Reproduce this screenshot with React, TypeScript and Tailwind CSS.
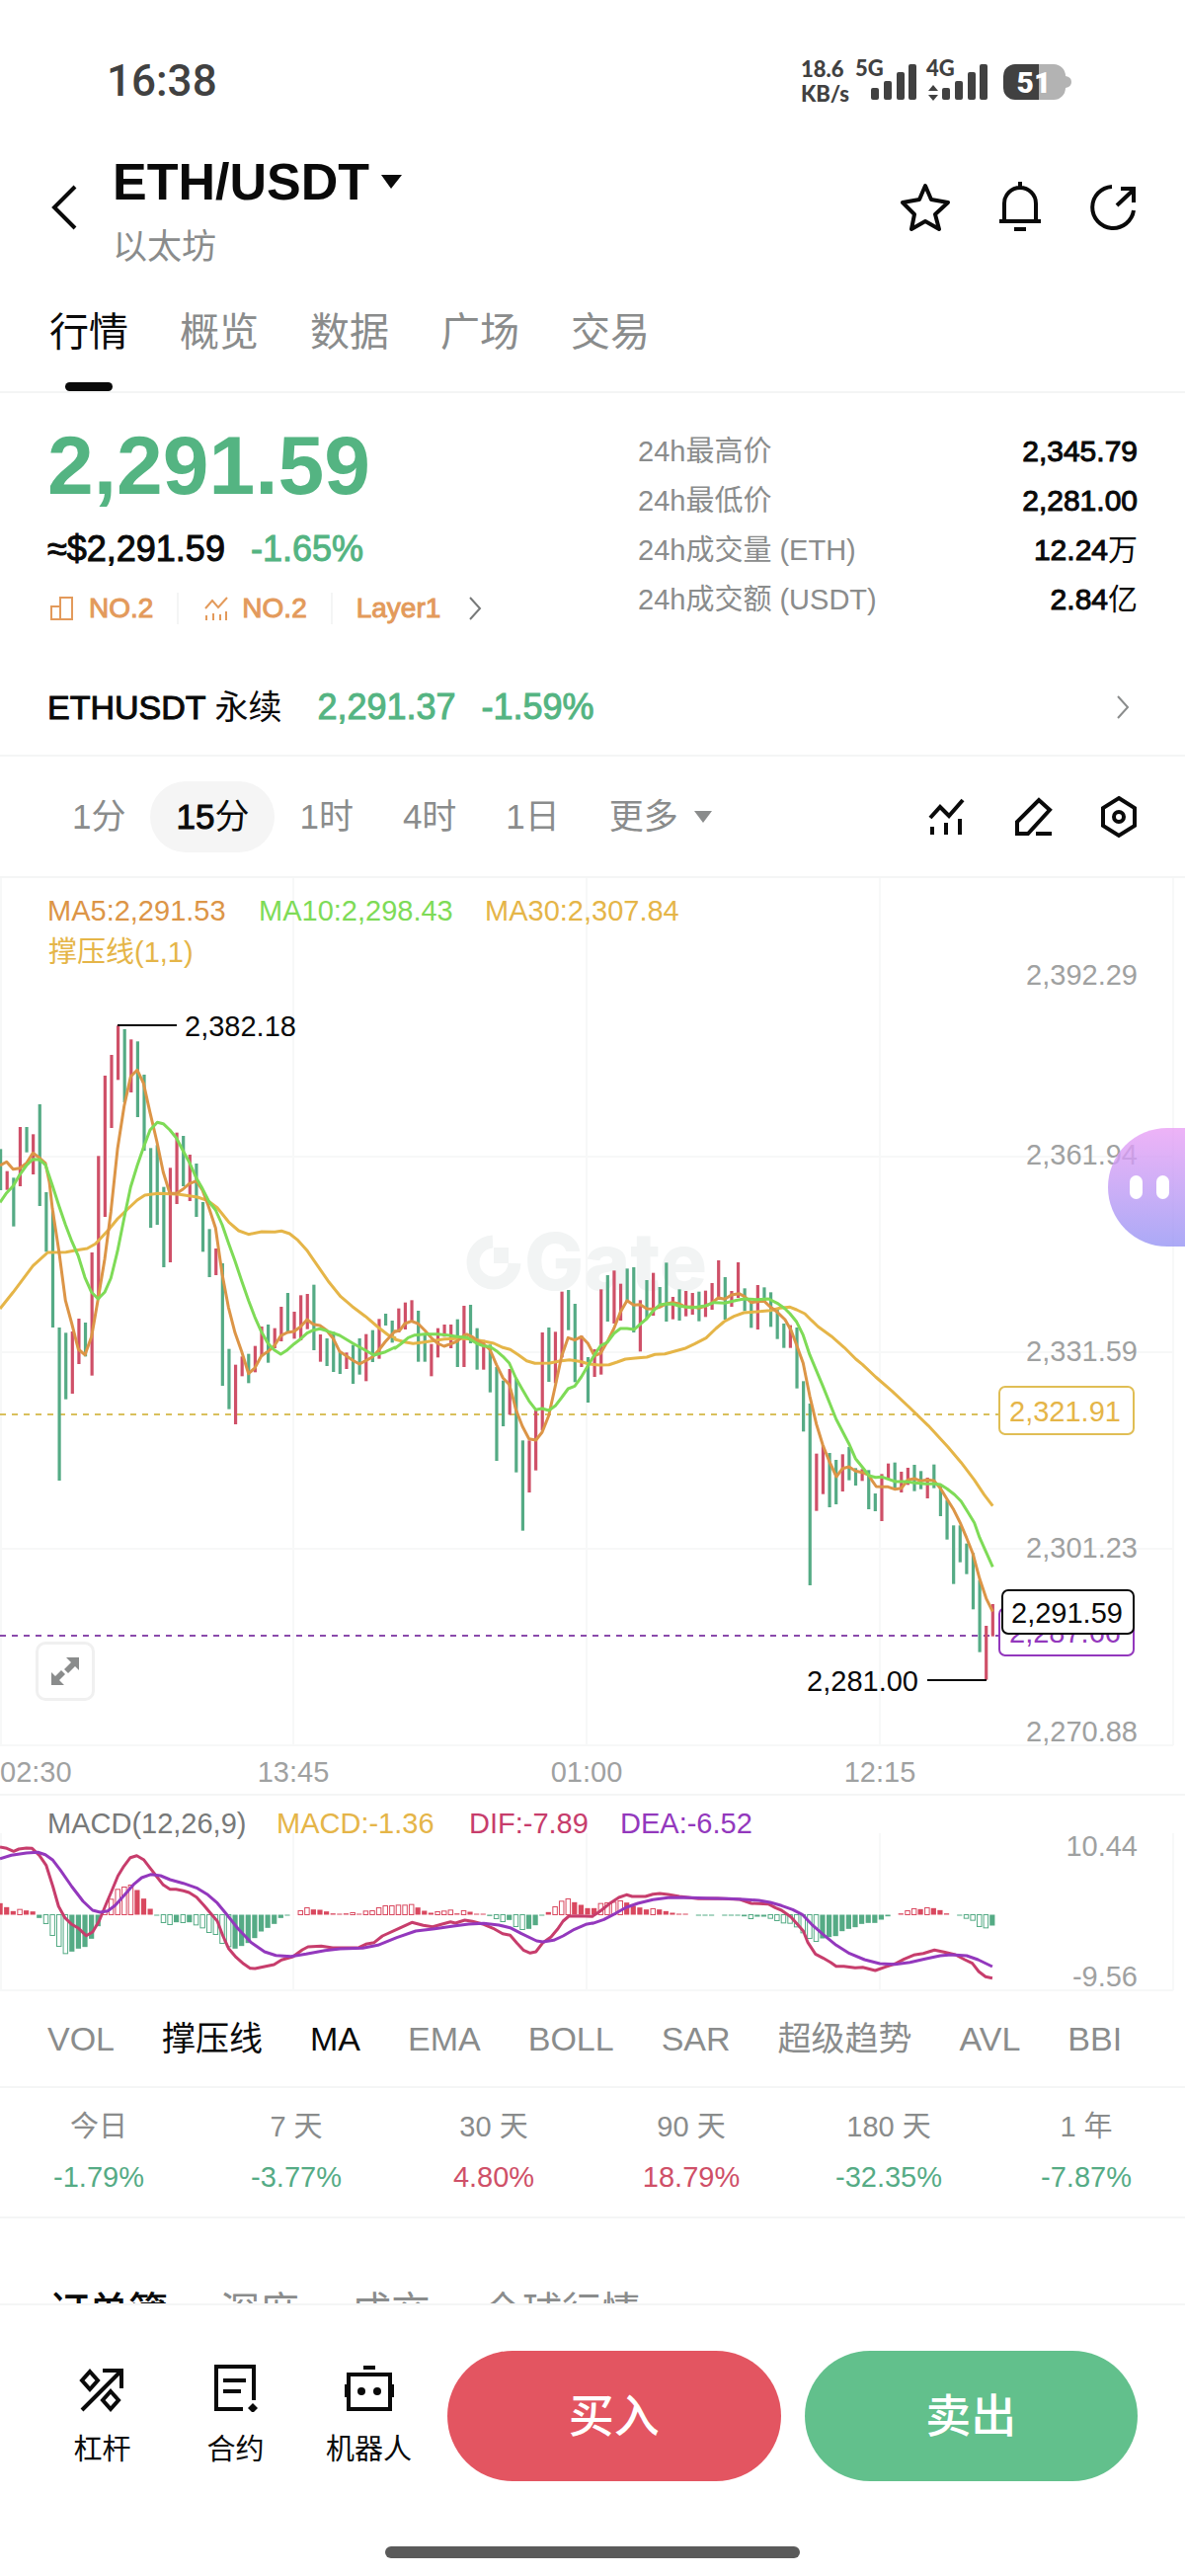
import React from 'react';

type Point = [number, number];

// One stretch of the price chart. Bars and averages are in thirds of a pixel from (x, y).
interface Segment {
  x: number;
  y: number;
  firstBar: number;
  bars: string;
  ma5: string;
  ma10: string;
  ma30: string;
}

const BAR_STEP = 6.61;
const UP = '#cf5068';
const DOWN = '#55ab85';
const MA5_COLOR = '#dc9547';
const MA10_COLOR = '#7edb57';
const MA30_COLOR = '#e5b548';
const DIF_COLOR = '#c73d6c';
const DEA_COLOR = '#9338bd';

const segments: Segment[] = [
  {
    x: 0,
    y: 1000,
    firstBar: 0,
    bars:
      'g490-615 r557-614 g577-725 r423-603 g423-500 r445-567 g354-663 g621-802 g678-1032 g1032-1497 g1048-1250 r1044-1233 r1005-1143 g1017-1120 r804-1178 r511-946 r267-696 r204-426 r115-280 g126-348 r157-318 g163-393 g264-495 g487-729 g478-720 g605-849 r547-834 r440-657 g450-603 r507-648 g534-696 g651-802 g733-879 r792-873 g837-1209 g1097-1280 r1145-1326 r1120-1180 g1112-1201 r1088-1168 r1029-1120 g1023-1139 r1034-1095 r969-1074 g927-1050 r984-1066 r934-1071 r930-1037 g902-1101 r1053-1136 g1065-1149 g1045-1167 g1105-1173 r1108-1158 g1085-1203 g1065-1175 r1052-1195 g1040-1137 r1006-1127 g990-1026 g1011-1078',
    ma5: '0,540 20,529 40,551 60,548 80,533 100,502 120,517 138,533 150,590 159,670 179,800 199,950 218,1020 238,1098 258,1115 278,1060 298,946 318,825 337,680 357,490 377,360 397,270 417,250 436,290 456,380 476,465 496,560 516,625 536,625 556,612 575,595 597,587 615,615 632,660 655,730 675,870 694,970 714,1048 734,1105 755,1172 774,1155 794,1118 814,1105 833,1088 853,1057 873,1047 893,1044 913,1030 933,1008 952,1022 972,1026 992,1040 1012,1065 1032,1105 1052,1118 1072,1132 1092,1143 1111,1133 1131,1122 1151,1100 1171,1075 1200,1043',
    ma10: '0,652 20,623 40,602 60,568 80,540 100,521 120,522 138,538 159,600 179,662 199,720 218,770 238,815 258,880 278,925 298,945 318,925 337,882 357,800 377,700 397,605 417,540 436,485 456,432 478,409 496,413 516,432 536,457 556,495 575,530 595,575 615,610 635,650 655,675 675,720 694,775 714,830 734,890 755,950 774,1000 794,1045 814,1080 833,1100 853,1113 873,1100 893,1082 913,1067 933,1049 952,1040 972,1036 992,1042 1032,1056 1072,1080 1111,1102 1136,1116 1171,1106 1200,1092',
    ma30: '0,975 40,925 100,845 145,804 200,803 232,797 265,792 290,778 330,735 357,702 385,675 417,645 440,630 480,625 540,627 600,636 630,646 660,668 695,712 725,738 755,749 795,741 835,742 855,739 880,747 905,767 932,797 965,845 1000,895 1035,938 1070,968 1110,998 1150,1032 1180,1055 1200,1063',
  },
  {
    x: 400,
    y: 1200,
    firstBar: 61,
    bars:
      'r374-447 r356-438 r349-415 g381-536 g453-536 r482-580 r434-523 r423-460 r423-495 g407-552 r366-552 g363-480 g434-560 r470-560 g484-629 g552-837 g593-732 r558-697 g588-872 g775-1049 r775-933 r682-866 r447-745 g432-597 r445-601 r323-523 g318-440 g360-598 r457-552 g522-660 r498-582 r316-575 g273-414 r259-420 r299-411 g253-352 g249-447 r349-505 g288-405 r266-396 g309-372 g235-414 r339-407 g316-411 r321-398 r327-393 g323-413 r320-400 r297-378 r228-348 g279-408 r321-369 r234-342 g313-382 g351-433 r303-438 g310-355 g325-430 g372-467 g420-494 r425-494',
    ma5: '0,445 15,440 30,420 50,413 70,420 90,440 110,463 129,480 149,489 169,482 189,474 209,456 218,453 234,460 248,470 268,482 288,498 308,545 328,585 347,605 357,640 367,680 387,732 407,770 428,774 447,750 467,700 487,610 506,520 526,463 546,470 566,460 586,480 606,518 625,510 645,475 665,435 685,385 705,350 725,364 745,362 765,375 784,376 804,370 824,360 844,356 864,360 883,370 903,369 923,373 943,367 963,357 982,342 1002,346 1022,333 1045,329 1062,338 1082,356 1102,353 1122,352 1141,370 1161,385 1185,408 1200,435',
    ma10: '0,495 20,480 40,463 60,455 90,452 129,452 160,455 189,460 220,463 248,480 268,488 288,490 308,503 328,520 347,540 367,585 387,620 407,655 428,682 447,678 467,684 487,670 506,645 526,618 546,610 566,582 586,548 606,515 625,487 645,477 665,450 685,435 705,435 727,438 745,422 765,405 784,382 804,363 824,360 844,361 864,367 903,372 943,366 970,356 1002,358 1040,349 1062,345 1100,347 1135,345 1161,358 1185,375 1200,390',
    ma30: '0,468 30,476 55,481 90,476 120,472 150,467 200,465 240,468 270,474 300,480 328,493 350,499 375,515 400,533 425,541 470,540 500,534 530,530 560,535 590,543 620,546 650,545 675,537 700,528 730,525 765,522 790,514 820,512 850,504 880,496 910,482 945,464 975,435 1000,414 1030,398 1060,387 1100,384 1140,380 1170,373 1200,370',
  },
  {
    x: 750,
    y: 1250,
    firstBar: 122,
    bars:
      'g282-467 g445-598 g513-1065 r665-839 r640-788 g663-828 g684-819 r667-780 g645-746 g709-762 r712-748 g715-834 g786-840 r727-870 r695-742 g692-772 r720-783 r708-760 g699-779 g718-773 r738-801 g698-770 g760-855 g806-926 g883-1061 g883-995 g938-1031 g967-1138 g1049-1268 r1188-1352 r1122-1220',
    ma5: '150,282 170,335 190,390 210,490 230,575 250,640 270,690 291,735 310,710 329,705 349,718 369,722 389,730 398,745 412,765 429,766 448,766 468,773 488,770 508,745 528,741 548,748 567,745 587,747 607,770 627,803 646,833 667,875 686,920 706,970 726,1045 746,1105 766,1145',
    ma10: '150,240 170,265 190,305 210,365 250,460 290,560 329,635 349,680 369,705 390,732 410,737 430,736 450,743 470,750 500,750 530,754 560,757 590,757 607,759 627,772 650,790 670,810 690,842 710,875 726,920 746,965 766,1009',
    ma30: '150,220 170,228 195,240 215,260 235,279 275,308 315,343 350,378 370,394 410,432 460,475 510,522 570,580 630,645 670,692 710,745 740,790 766,824',
  },
];

// MACD histogram, thirds of a pixel; a trailing h is a hollow bar
const histogram =
  '35 23 11 16h 13 10 -10 -27h -63h -96h -118h -112 -103 -98 -73 -35 12h 47h 77h 84h 90h 75 49 18 -3 -24h -30h -23 -24h -23 -31h -40h -54h -60h -87h -97h -103 -95 -86 -71 -51 -40 -28 -10 -3 0 12h 21h 16 15 10 4 2 4 6h 2 11h 12h 21h 27h 27h 29h 29h 31h 22 12 6 9h 11h 14h 4 12h 9 2 1 -4 -12h -21h -16 -36h -45h -43 -32 -3 8 24h 41h 48h 38 30 20 20 34h 36h 38h 42h 37 27 22 16 18h 16 11 6 1 1 0 -3 -3 -1 0 -2 -2 -2 -5 -12h -6 -6 -11h -18h -25h -26h -37h -55h -72h -81h -72 -68 -65 -50 -43 -38 -28 -25 -25 -15 -5 0 4 12h 18h 17 21h 20 14 4 0 -3 -11h -17h -36h -40h -33'.split(' ');

const macdSegments = [
  {
    x: 0,
    y: 1640,
    dif: '0,690 18,694 36,703 50,696 70,693 85,694 104,715 122,745 140,810 155,870 172,905 190,925 208,937 228,959 245,948 262,915 280,865 295,825 312,778 328,748 345,722 362,716 380,728 398,755 415,780 432,805 450,818 466,818 485,823 500,828 520,842 540,868 560,895 575,915 590,960 605,998 625,1025 645,1045 662,1058 675,1059 700,1053 725,1047 745,1033 775,1023 800,1002 815,993 850,991 880,996 905,996 950,995 968,985 990,980 1012,960 1050,940 1090,919 1120,928 1145,932 1170,924 1192,917 1205,921 1230,912 1250,916 1280,925 1305,937 1330,953 1350,958 1368,982 1385,1003 1403,1012 1418,1008 1437,980 1458,963 1475,940 1490,915 1505,900 1530,899 1568,901',
    dea: '0,725 30,715 70,708 100,706 120,713 140,730 160,760 190,810 220,855 245,882 265,888 285,884 305,867 330,835 355,802 375,783 400,773 425,777 450,789 485,800 520,814 550,835 575,860 600,895 630,938 665,980 700,1008 730,1019 770,1022 810,1015 860,1004 900,999 960,997 1000,988 1050,965 1100,945 1150,938 1200,930 1240,924 1280,922 1320,927 1350,935 1380,953 1420,975 1437,978 1465,973 1490,960 1520,940 1550,925 1568,921',
  },
  {
    x: 600,
    y: 1740,
    dif: '0,600 20,585 45,562 70,543 90,535 105,540 140,540 160,533 178,531 200,534 230,540 280,547 330,546 390,549 420,561 440,562 465,563 485,575 500,582 525,602 540,622 558,645 570,680 590,715 610,727 630,740 645,752 665,752 695,757 715,755 748,765 775,754 800,745 825,730 850,718 875,713 905,703 930,709 960,717 985,732 1005,743 1022,768 1040,784 1058,788',
    dea: '0,622 30,610 60,592 90,573 120,561 160,550 200,544 240,543 300,545 360,547 400,549 440,552 470,558 500,568 530,580 555,595 580,625 610,655 645,688 680,713 720,732 760,744 800,746 840,740 880,730 920,720 950,717 990,720 1020,732 1058,753',
  },
];

const toPoints = (text: string, x: number, y: number, sx: number, sy: number): Point[] =>
  text.split(' ').map((pair) => {
    const [px, py] = pair.split(',').map(Number);
    return [x + px * sx, y + py * sy];
  });

const join = (points: Point[]) => points.map(([x, y]) => `${x.toFixed(1)},${y.toFixed(1)}`).join(' ');

const maLine = (key: 'ma5' | 'ma10' | 'ma30') =>
  join(segments.flatMap((s) => toPoints(s[key], s.x, s.y, 1 / 3, 1 / 3)));

const macdLine = (key: 'dif' | 'dea') =>
  join(macdSegments.flatMap((s) => toPoints(s[key], s.x, s.y, 1 / 2.613, 1 / 3)));

const gridX = [1, 297, 594, 891, 1188];

const PriceChart: React.FC = () => (
  <svg viewBox="0 889 1200 927" className="block w-full h-auto" fontSize="29" role="img" aria-label="ETH/USDT 15分">
    <g stroke="#f7f8f8" strokeWidth="2">
      {gridX.map((x) => (
        <line key={x} x1={x} x2={x} y1="889" y2="1767" />
      ))}
      {[1171, 1369, 1568, 1767].map((y) => (
        <line key={y} x1="0" x2="1188" y1={y} y2={y} />
      ))}
    </g>

    {/* Watermark */}
    <g fill="none" stroke="#f2f4f4">
      <path d="M499 1257a21 21 0 1 0 22 22" strokeWidth="13" />
      <path d="M500 1263h15v16h-15z" fill="#f2f4f4" stroke="none" />
    </g>
    <text x="531" y="1306" fontSize="80" fontFamily="Inter" fontWeight="800" fill="#f2f4f4">Gate</text>

    <line x1="0" x2="1011" y1="1432" y2="1432" stroke="#d9c05c" strokeWidth="2" strokeDasharray="6 6" />
    <line x1="0" x2="1011" y1="1656" y2="1656" stroke="#8a4aab" strokeWidth="2" strokeDasharray="6 6" />

    {segments.map((s) =>
      s.bars.split(' ').map((bar, i) => {
        const [high, low] = bar.slice(1).split('-').map(Number);
        return (
          <rect
            key={s.firstBar + i}
            x={(s.firstBar + i) * BAR_STEP - 1}
            y={s.y + high / 3}
            width="3.2"
            height={(low - high) / 3}
            fill={bar[0] === 'r' ? UP : DOWN}
          />
        );
      })
    )}

    <g fill="none" strokeWidth="3" strokeLinejoin="round">
      <polyline points={maLine('ma30')} stroke={MA30_COLOR} />
      <polyline points={maLine('ma5')} stroke={MA5_COLOR} />
      <polyline points={maLine('ma10')} stroke={MA10_COLOR} />
    </g>

    {/* Legend */}
    <text x="48" y="932" fill={MA5_COLOR}>MA5:2,291.53</text>
    <text x="262" y="932" fill={MA10_COLOR}>MA10:2,298.43</text>
    <text x="491" y="932" fill={MA30_COLOR}>MA30:2,307.84</text>
    <text x="49" y="974" fill={MA30_COLOR}>撑压线(1,1)</text>

    {/* High and low */}
    <g stroke="#0a0a0a" strokeWidth="2">
      <line x1="119" x2="179" y1="1038" y2="1038" />
      <line x1="939" x2="999" y1="1701" y2="1701" />
    </g>
    <text x="187" y="1049" fill="#0a0a0a">2,382.18</text>
    <text x="930" y="1712" textAnchor="end" fill="#0a0a0a">2,281.00</text>

    {/* Price scale */}
    <g fill="#9fa1a1" textAnchor="end">
      <text x="1152" y="997">2,392.29</text>
      <text x="1152" y="1179">2,361.94</text>
      <text x="1152" y="1378">2,331.59</text>
      <text x="1152" y="1577">2,301.23</text>
      <text x="1152" y="1763">2,270.88</text>
    </g>
    <g strokeWidth="2">
      <rect x="1012" y="1404" width="136" height="48" rx="6" fill="#fff" stroke="#e0be55" />
      <rect x="1012" y="1628" width="136" height="48" rx="6" fill="#fff" stroke={DEA_COLOR} />
    </g>
    <text x="1022" y="1439" fill={MA30_COLOR}>2,321.91</text>
    <text x="1022" y="1663" fill={DEA_COLOR}>2,287.66</text>
    <rect x="1015" y="1610" width="133" height="44" rx="6" fill="#fff" stroke="#0a0a0a" strokeWidth="2" />
    <text x="1024" y="1643" fill="#0a0a0a">2,291.59</text>

    {/* Time scale */}
    <g fill="#9fa1a1" textAnchor="middle">
      <text x="0" y="1804" textAnchor="start">02:30</text>
      <text x="297" y="1804">13:45</text>
      <text x="594" y="1804">01:00</text>
      <text x="891" y="1804">12:15</text>
    </g>
  </svg>
);

const MacdChart: React.FC = () => (
  <svg viewBox="0 1818 1200 198" className="block w-full h-auto" fontSize="29" role="img" aria-label="MACD">
    <g stroke="#f7f8f8" strokeWidth="2">
      {gridX.map((x) => (
        <line key={x} x1={x} x2={x} y1="1856" y2="2015" />
      ))}
      <line x1="0" x2="1188" y1="2015" y2="2015" />
    </g>
    {histogram.map((item, i) => {
      const value = parseInt(item, 10);
      if (!value) return null;
      const hollow = item.endsWith('h');
      const color = value > 0 ? '#d9485f' : DOWN;
      const height = Math.max(Math.abs(value) / 3, 1);
      return (
        <rect
          key={i}
          x={i * BAR_STEP - (hollow ? 2 : 2.5)}
          y={value > 0 ? 1938.5 - height : 1938.5}
          width={hollow ? 4.5 : 5.2}
          height={height}
          fill={hollow ? '#fff' : color}
          stroke={hollow ? color : 'none'}
          strokeWidth="1"
        />
      );
    })}
    <g fill="none" strokeWidth="3" strokeLinejoin="round">
      <polyline points={macdLine('dif')} stroke={DIF_COLOR} />
      <polyline points={macdLine('dea')} stroke={DEA_COLOR} />
    </g>
    <text x="48" y="1856" fill="#777979">MACD(12,26,9)</text>
    <text x="280" y="1856" fill={MA30_COLOR}>MACD:-1.36</text>
    <text x="475" y="1856" fill={DIF_COLOR}>DIF:-7.89</text>
    <text x="628" y="1856" fill={DEA_COLOR}>DEA:-6.52</text>
    <g fill="#9fa1a1" textAnchor="end">
      <text x="1152" y="1879">10.44</text>
      <text x="1152" y="2011">-9.56</text>
    </g>
  </svg>
);

const StatusBar: React.FC = () => (
  <div className="flex items-center justify-between h-[152px] pt-3 pl-[108px] pr-[114px] text-[#414141]">
    <span className="font-['Roboto'] font-medium text-[44px] leading-[48px]">16:38</span>
    <div className="flex items-center gap-1 font-['Lato'] font-black">
      <div className="text-[22px] leading-[25px]">
        <div>18.6</div>
        <div>KB/s</div>
      </div>
      <svg width="222" height="52" viewBox="864 54 222 52" fill="#414141">
        <text x="866" y="75" fontSize="22">5G</text>
        <text x="938" y="75" fontSize="22">4G</text>
        <rect x="882" y="87" width="8" height="12" rx="2" />
        <rect x="895" y="80" width="8" height="19" rx="2" />
        <rect x="908" y="71" width="8" height="28" rx="2" />
        <rect x="920" y="63" width="8" height="36" rx="2" />
        <path d="M945 84l5 6h-10zM945 100l5-6h-10z" />
        <rect x="954" y="87" width="8" height="12" rx="2" />
        <rect x="967" y="80" width="8" height="19" rx="2" />
        <rect x="980" y="71" width="8" height="28" rx="2" />
        <rect x="992" y="63" width="8" height="36" rx="2" />
        <path d="M1052 63h15a12 12 0 0 1 12 12q6 1 6 6t-6 6a12 12 0 0 1-12 12h-15z" fill="#b3b3b3" />
        <path d="M1052 63h-24a12 12 0 0 0-12 12v12a12 12 0 0 0 12 12h24z" />
        <text x="1047" y="92" fontSize="30" fontFamily="Roboto" fontWeight="900" textAnchor="middle" fill="#fff">51</text>
      </svg>
    </div>
  </div>
);

const Chevron: React.FC<{ className: string }> = ({ className }) => (
  <svg viewBox="0 0 14 24" className={className} fill="none" stroke="currentColor" strokeWidth="2">
    <path d="M2 1l10 11L2 23" />
  </svg>
);

const Header: React.FC = () => (
  <header className="flex items-center justify-between px-12">
    <div className="flex items-center">
      <button aria-label="返回" className="w-[66px] h-[60px] pl-1 pb-1">
        <svg width="26" height="46" viewBox="0 0 26 46" fill="none" stroke="#0a0a0a" strokeWidth="4">
          <path d="M24 2L3 23l21 21" />
        </svg>
      </button>
      <div>
        <button className="flex items-center gap-3 text-[52px] leading-[64px] font-bold">
          ETH/USDT
          <svg width="21" height="14" viewBox="0 0 21 14"><path d="M0 0h21L10 14z" fill="#0a0a0a" /></svg>
        </button>
        <div className="mt-3 text-[35px] leading-[44px] text-[#8a8c8c]">以太坊</div>
      </div>
    </div>
    <div className="flex items-center gap-11 pb-1">
      <button aria-label="自选">
        <svg width="52" height="52" viewBox="0 0 52 52" fill="none" stroke="#0a0a0a" strokeWidth="4" strokeLinejoin="round">
          <path d="M25 4l6 14 17 3-13 12 4 15-14-8-14 8 3-15L2 21l17-3z" />
        </svg>
      </button>
      <button aria-label="提醒">
        <svg width="52" height="52" viewBox="0 0 52 52" fill="none" stroke="#0a0a0a" strokeWidth="4">
          <path d="M25 0v6M9 40V22a16 16 0 0 1 32 0v18M4 40h42M19 48h12" />
        </svg>
      </button>
      <button aria-label="分享">
        <svg width="48" height="52" viewBox="0 0 48 52" fill="none" stroke="#0a0a0a" strokeWidth="4">
          <path d="M22 5a21 21 0 1 0 22 24M27 24L44 8M31 7h13v14" />
        </svg>
      </button>
    </div>
  </header>
);

const tabs = ['行情', '概览', '数据', '广场', '交易'];

const stats = [
  { label: '24h最高价', value: '2,345.79' },
  { label: '24h最低价', value: '2,281.00' },
  { label: '24h成交量 (ETH)', value: '12.24', unit: '万' },
  { label: '24h成交额 (USDT)', value: '2.84', unit: '亿' },
];

const PriceSummary: React.FC = () => (
  <section className="flex justify-between px-12 border-t-2 border-[#f4f5f5]">
    <div>
      <div className="mt-[31px] text-[84px] leading-[84px] font-bold text-[#54b482]">2,291.59</div>
      <div className="flex gap-[26px] mt-[19px] text-[36px] leading-[48px] [-webkit-text-stroke:1px]">
        <span>≈$2,291.59</span>
        <span className="text-[#54b482]">-1.65%</span>
      </div>
      <div className="flex items-center mt-4 text-[28px] leading-[40px] text-[#e39a5b] [-webkit-text-stroke:1px]">
        <svg width="30" height="28" viewBox="0 0 30 28" fill="none" stroke="currentColor" strokeWidth="2">
          <path d="M4 12h9v13H4zM13 3h12v22H13z" />
        </svg>
        <span className="ml-3">NO.2</span>
        <span className="w-[2px] h-8 mx-6 bg-[#f4f5f5]" />
        <svg width="28" height="28" viewBox="0 0 28 28" fill="none" stroke="currentColor" strokeWidth="2">
          <path d="M3 14l7-8 6 7 9-10M4 21v5M11 19v7M18 20v6M24 17v9" />
        </svg>
        <span className="ml-3">NO.2</span>
        <span className="w-[2px] h-8 mx-6 bg-[#f4f5f5]" />
        <span>Layer1</span>
        <Chevron className="w-[14px] h-6 ml-7 text-[#777979]" />
      </div>
    </div>
    <dl className="w-[506px] mt-[34px]">
      {stats.map((stat) => (
        <div key={stat.label} className="flex justify-between leading-[50px]">
          <dt className="text-[29px] text-[#8a8c8c]">{stat.label}</dt>
          <dd className="text-[30px]">
            <span className="[-webkit-text-stroke:1px]">{stat.value}</span>
            {stat.unit}
          </dd>
        </div>
      ))}
    </dl>
  </section>
);

const Intervals: React.FC = () => (
  <div className="flex items-center justify-between px-12 pt-[25px] pb-6 border-y-2 border-[#f4f5f5]">
    <div className="flex items-center text-[35px] leading-[72px] text-[#8a8c8c]">
      <button className="px-[25px]">1分</button>
      <button className="px-[26px] rounded-full bg-[#f5f5f5] text-[#0a0a0a]">
        <span className="[-webkit-text-stroke:1px]">15</span>分
      </button>
      <button className="px-[25px]">1时</button>
      <button className="px-[25px]">4时</button>
      <button className="px-[25px]">1日</button>
      <button className="flex items-center gap-4 px-[25px]">
        更多
        <svg width="18" height="12" viewBox="0 0 18 12"><path d="M0 0h18L9 12z" fill="#8a8c8c" /></svg>
      </button>
    </div>
    <div className="flex items-center gap-12">
      <button aria-label="指标">
        <svg width="40" height="40" viewBox="0 0 40 40" fill="none" stroke="#0a0a0a" strokeWidth="4">
          <path d="M4 21l10-11 9 9L37 3M6 30v8M20 26v12M34 22v16" />
        </svg>
      </button>
      <button aria-label="画线">
        <svg width="40" height="40" viewBox="0 0 40 40" fill="none" stroke="#0a0a0a" strokeWidth="4">
          <path d="M4 37V25L26 3l11 10-22 24zM23 37h16" />
        </svg>
      </button>
      <button aria-label="设置">
        <svg width="38" height="44" viewBox="0 0 38 44" fill="none" stroke="#0a0a0a" strokeWidth="4">
          <path d="M19 3l16 10v18L19 41 3 31V13z" />
          <circle cx="19" cy="22" r="5" />
        </svg>
      </button>
    </div>
  </div>
);

const indicators = ['VOL', '撑压线', 'MA', 'EMA', 'BOLL', 'SAR', '超级趋势', 'AVL', 'BBI'];
const activeIndicators = ['撑压线', 'MA'];

const periods = [
  { name: '今日', change: '-1.79%' },
  { name: '7 天', change: '-3.77%' },
  { name: '30 天', change: '4.80%' },
  { name: '90 天', change: '18.79%' },
  { name: '180 天', change: '-32.35%' },
  { name: '1 年', change: '-7.87%' },
];

const BottomBar: React.FC = () => (
  <footer className="border-t-2 border-[#f4f5f5] bg-white">
    <div className="flex items-start pt-[46px] pl-9 pr-12">
      <button className="flex flex-col items-center gap-5 w-[135px] mt-[14px] text-[29px] leading-[36px]">
        <svg width="48" height="48" viewBox="0 0 48 48" fill="none" stroke="#0a0a0a" strokeWidth="4">
          <path d="M3 46L42 7M24 6h19v18M11 7l8 9-8 9-8-9zM32 27l8 9-8 9-8-9z" />
        </svg>
        杠杆
      </button>
      <button className="flex flex-col items-center gap-5 w-[135px] mt-[14px] text-[29px] leading-[36px]">
        <svg width="48" height="48" viewBox="0 0 48 48" fill="none" stroke="#0a0a0a" strokeWidth="4">
          <path d="M31 45H4V2h38v34M11 16h23M11 27h18" />
          <path d="M41 39l5 5-5 5-5-5z" fill="#0a0a0a" stroke="none" />
        </svg>
        合约
      </button>
      <button className="flex flex-col items-center gap-5 w-[135px] mt-[14px] text-[29px] leading-[36px]">
        <svg width="52" height="48" viewBox="0 0 52 48" fill="none" stroke="#0a0a0a" strokeWidth="4">
          <path d="M5 10h42v35H5zM20 3h12M3 20v13M49 20v13" />
          <circle cx="18" cy="27" r="4" fill="#0a0a0a" stroke="none" />
          <circle cx="34" cy="27" r="4" fill="#0a0a0a" stroke="none" />
        </svg>
        机器人
      </button>
      <div className="flex flex-1 gap-6 ml-3 text-[46px] leading-[130px] font-medium text-white">
        <button className="flex-1 h-[132px] rounded-full bg-[#e35561]">买入</button>
        <button className="flex-1 h-[132px] rounded-full bg-[#62c08c]">卖出</button>
      </div>
    </div>
    <div className="w-[420px] h-3 mx-auto mt-[66px] mb-[18px] rounded-full bg-[#5a5a5a]" />
  </footer>
);

const App: React.FC = () => {
  return (
    <div className="bg-white overflow-hidden text-[#0a0a0a] font-['Liberation_Sans','Noto_Sans_CJK_SC',sans-serif]">
      <StatusBar />
      <Header />

      <nav className="flex gap-[52px] px-[50px] pt-10 text-[40px] leading-[48px]">
        {tabs.map((tab, index) => (
          <button key={tab} className={index === 0 ? 'flex flex-col items-center' : 'self-start text-[#8a8c8c]'}>
            <span>{tab}</span>
            {index === 0 && <span className="w-12 h-[9px] mt-[27px] rounded-full bg-[#0a0a0a]" />}
          </button>
        ))}
      </nav>

      <PriceSummary />

      <a href="#perp" className="flex items-center justify-between h-24 mt-8 pl-12 pr-14">
        <span className="flex items-center">
          <span className="text-[34px]">
            <span className="[-webkit-text-stroke:1px]">ETHUSDT</span> 永续
          </span>
          <span className="ml-9 text-[36px] text-[#54b482] [-webkit-text-stroke:1px]">2,291.37</span>
          <span className="ml-[26px] text-[36px] text-[#54b482] [-webkit-text-stroke:1px]">-1.59%</span>
        </span>
        <Chevron className="w-[14px] h-6 text-[#8a8c8c]" />
      </a>

      <Intervals />

      <div className="relative">
        <PriceChart />
        <button aria-label="全屏" className="absolute left-9 bottom-[94px] flex items-center justify-center w-[60px] h-[60px] rounded-[10px] border-[3px] border-[#f0f0f0] bg-white">
          <svg width="32" height="32" viewBox="0 0 32 32" fill="#8a8c8c">
            <path d="M17 2h13v13l-4-4-7 7-4-4 7-7zM15 30H2V17l4 4 6-6 4 4-6 6z" />
          </svg>
        </button>
        {/* Assistant bubble */}
        <button aria-label="助手" className="absolute right-0 top-[253px] flex items-center gap-[14px] w-[78px] h-[120px] pl-[22px] rounded-l-full bg-linear-to-b from-[#e9a0f5]/80 to-[#9694f4]/80">
          <span className="w-[13px] h-6 rounded-full bg-white" />
          <span className="w-[13px] h-6 rounded-full bg-white" />
        </button>
      </div>

      <div className="border-t-2 border-[#f4f5f5]">
        <MacdChart />
      </div>

      {/* Indicators */}
      <div className="border-b-2 border-[#f4f5f5]">
        <div className="flex gap-12 ml-12 mr-12 overflow-hidden whitespace-nowrap text-[34px] leading-[96px]">
          {indicators.map((name) => (
            <button key={name} className={activeIndicators.includes(name) ? 'shrink-0' : 'shrink-0 text-[#8a8c8c]'}>
              {name}
            </button>
          ))}
        </div>
      </div>

      {/* Performance by period */}
      <div className="grid grid-cols-6 pt-[15px] pb-4 border-b-2 border-[#f4f5f5] text-center text-[29px] leading-[48px]">
        {periods.map((period) => (
          <div key={period.name} className="flex flex-col gap-[3px]">
            <span className="text-[#8a8c8c]">{period.name}</span>
            <span className={period.change.startsWith('-') ? 'text-[#55ab85]' : 'text-[#cf5068]'}>{period.change}</span>
          </div>
        ))}
      </div>

      <div className="flex gap-[53px] h-[86px] px-[50px] pt-[70px] overflow-hidden text-[40px] leading-[48px] text-[#8a8c8c]">
        <button className="shrink-0 self-start font-medium text-[#0a0a0a]">订单簿</button>
        <button className="shrink-0 self-start">深度</button>
        <button className="shrink-0 self-start">成交</button>
        <button className="shrink-0 self-start">全球行情</button>
      </div>

      <BottomBar />
    </div>
  );
};

export default App;
